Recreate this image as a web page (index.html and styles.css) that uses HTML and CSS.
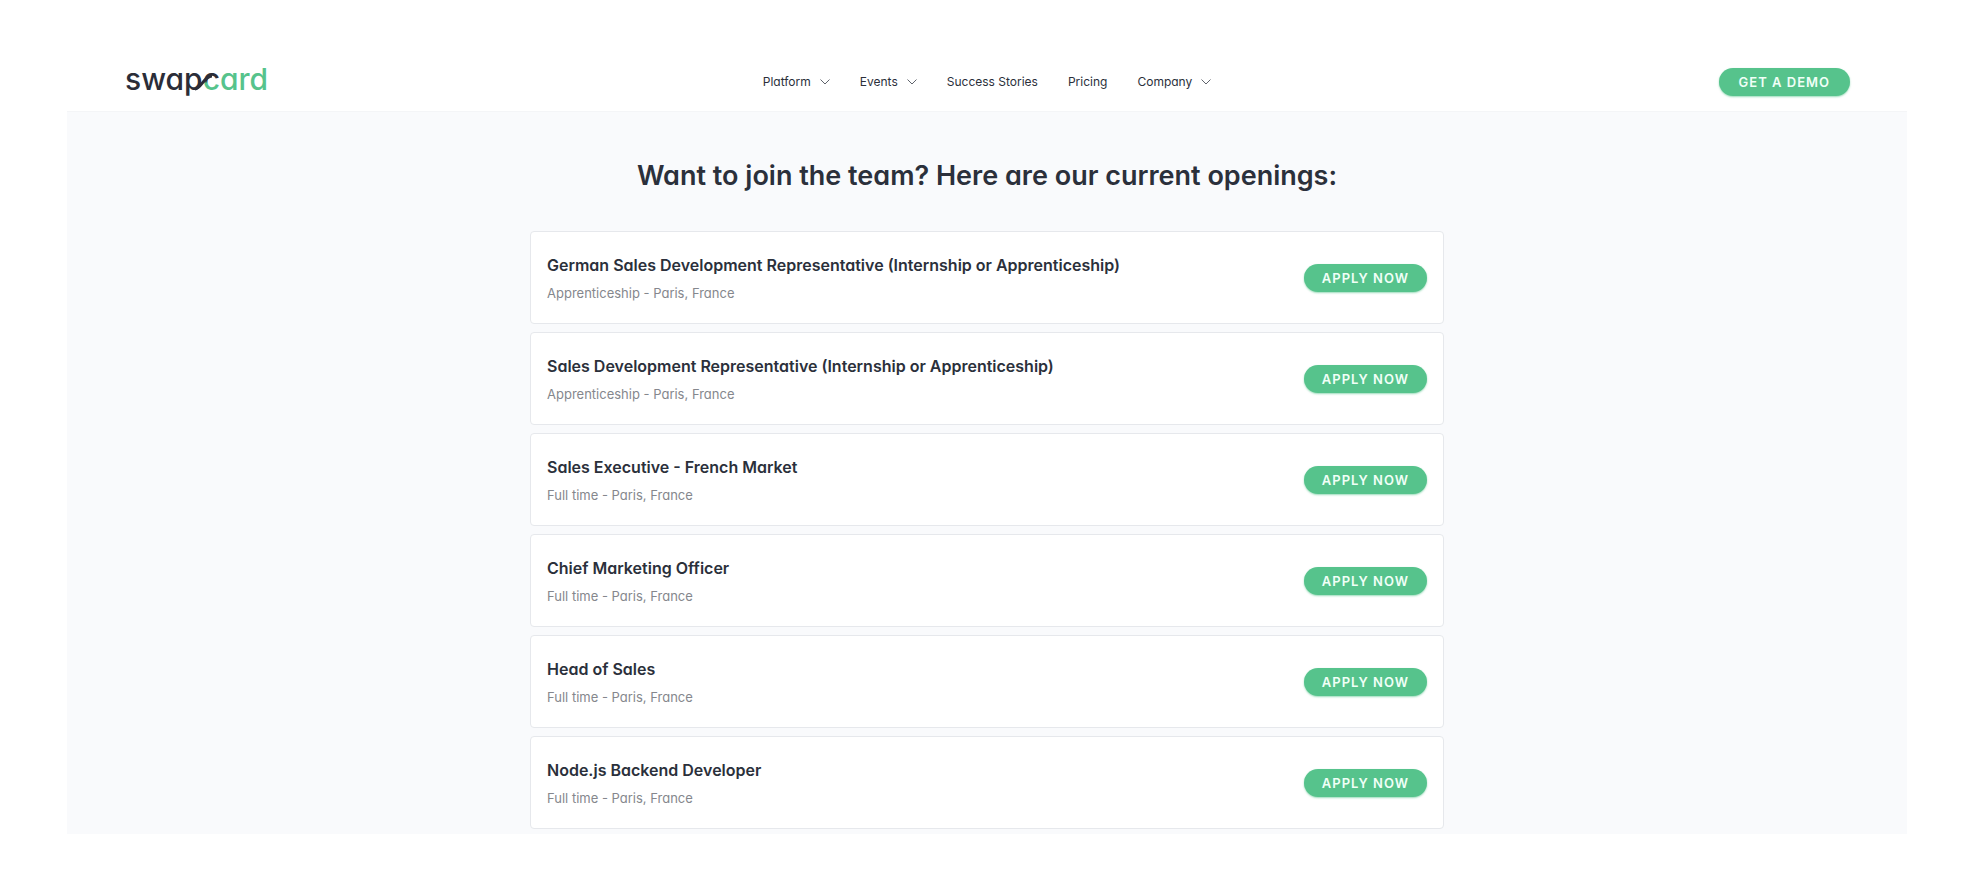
FILE: index.html
```html
<!DOCTYPE html>
<html lang="en">
<head>
    <meta charset="UTF-8">
    <meta name="viewport" content="width=device-width, initial-scale=1.0">
    <title>Careers - Swapcard</title>
    <link rel="stylesheet" href="styles.css">
</head>
<body>
    <header class="header">
        <a class="logo" href="#" aria-label="Swapcard">
            <svg width="144" height="40" viewBox="0 0 144 40">
                <defs>
                    <linearGradient id="fade" x1="0" y1="0" x2="0" y2="1">
                        <stop offset="0.54" stop-color="#2b2d38"/>
                        <stop offset="0.62" stop-color="#56c38c"/>
                    </linearGradient>
                </defs>
                <text class="logo-text" x="1" y="28">swap<tspan fill="url(#fade)">c</tspan><tspan class="logo-green">ard</tspan></text>
                <path d="M71 27 C77 27 80 14 88 14" fill="none" stroke="#2b2d38" stroke-width="3"/>
            </svg>
        </a>
        <nav class="nav">
            <a href="#">Platform <svg class="chevron" width="10" height="6" viewBox="0 0 10 6"><path d="M.5 .5L5 5 9.500 .5"/></svg></a>
            <a href="#">Events <svg class="chevron" width="10" height="6" viewBox="0 0 10 6"><path d="M.5 .5L5 5 9.500 .5"/></svg></a>
            <a href="#">Success Stories</a>
            <a href="#">Pricing</a>
            <a href="#">Company <svg class="chevron" width="10" height="6" viewBox="0 0 10 6"><path d="M.5 .5L5 5 9.500 .5"/></svg></a>
        </nav>
        <a class="btn" href="#">GET A DEMO</a>
    </header>
    <main class="openings">
        <h1>Want to join the team? Here are our current openings:</h1>
        <ul class="jobs">
            <li class="job">
                <div>
                    <h2>German Sales Development Representative (Internship or Apprenticeship)</h2>
                    <p>Apprenticeship - Paris, France</p>
                </div>
                <a class="btn" href="#">APPLY NOW</a>
            </li>
            <li class="job">
                <div>
                    <h2>Sales Development Representative (Internship or Apprenticeship)</h2>
                    <p>Apprenticeship - Paris, France</p>
                </div>
                <a class="btn" href="#">APPLY NOW</a>
            </li>
            <li class="job">
                <div>
                    <h2>Sales Executive - French Market</h2>
                    <p>Full time - Paris, France</p>
                </div>
                <a class="btn" href="#">APPLY NOW</a>
            </li>
            <li class="job">
                <div>
                    <h2>Chief Marketing Officer</h2>
                    <p>Full time - Paris, France</p>
                </div>
                <a class="btn" href="#">APPLY NOW</a>
            </li>
            <li class="job">
                <div>
                    <h2>Head of Sales</h2>
                    <p>Full time - Paris, France</p>
                </div>
                <a class="btn" href="#">APPLY NOW</a>
            </li>
            <li class="job">
                <div>
                    <h2>Node.js Backend Developer</h2>
                    <p>Full time - Paris, France</p>
                </div>
                <a class="btn" href="#">APPLY NOW</a>
            </li>
        </ul>
    </main>
</body>
</html>
```
FILE: styles.css
```css
* {
    box-sizing: border-box;
}

body {
    margin: 0;
    padding: 52px 67px;
    background: #fff;
    color: #2b303b;
    font-family: Inter, "Open Sans", sans-serif;
    font-feature-settings: "cv11";
}

a {
    color: inherit;
    text-decoration: none;
}

.header {
    display: grid;
    grid-template-columns: 1fr auto 1fr;
    align-items: center;
    height: 60px;
    padding: 0 57px;
    border-bottom: 1px solid #f4f5f7;
}

.header .btn {
    justify-self: end;
}

.logo svg {
    display: block;
}

.logo-text {
    font-size: 30px;
    font-weight: 500;
    fill: #2b2d38;
}

.logo-green {
    fill: #56c38c;
}

.nav {
    display: flex;
    gap: 30px;
    font-size: 12px;
    line-height: 16px;
}

.nav a {
    display: flex;
    align-items: center;
    gap: 9px;
}

.chevron path {
    fill: none;
    stroke: #60646c;
}

.btn {
    flex: none;
    padding: 0 20px;
    border-radius: 14px;
    background: #56c38c;
    box-shadow: 0 1px 2px rgba(86, 195, 140, 0.6);
    color: #f0fff7;
    font-size: 13px;
    font-weight: 600;
    letter-spacing: 1px;
    line-height: 28px;
}

.openings {
    padding: 44px 24px 5px;
    background: #f9fafc;
}

.openings h1 {
    margin: 0 0 35px;
    font-size: 27px;
    font-weight: 600;
    line-height: 40px;
    text-align: center;
}

.jobs {
    display: grid;
    gap: 8px;
    max-width: 914px;
    margin: 0 auto;
    padding: 0;
    list-style: none;
}

.job {
    display: flex;
    align-items: center;
    justify-content: space-between;
    gap: 16px;
    padding: 20px 16px;
    border: 1px solid #e6e8ec;
    border-radius: 4px;
    background: #fff;
}

.job .btn {
    padding: 0 18px;
}

.job h2 {
    margin: 0 0 5px;
    font-size: 16px;
    font-weight: 600;
    line-height: 26px;
}

.job p {
    margin: 0;
    color: #85878d;
    font-size: 13px;
    line-height: 20px;
}
```
